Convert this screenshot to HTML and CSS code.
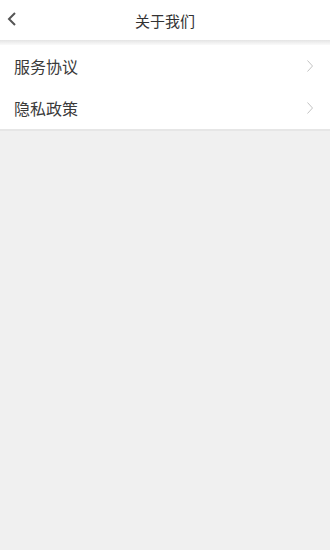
FILE: index.html
```html
<!DOCTYPE html>
<html lang="zh">
<head>
<meta charset="utf-8">
<link rel="stylesheet" href="styles.css">
</head>
<body>
<div class="page">
  <header class="nav">
    <svg class="back" width="12" height="16" viewBox="0 0 12 16"><path d="M9 2 L3 8 L9 14" fill="none" stroke="#555" stroke-width="2"/></svg>
    <div class="title">关于我们</div>
  </header>
  <div class="shadow"></div>
  <ul class="list">
    <li class="item"><span>服务协议</span><svg class="arrow" width="8" height="14" viewBox="0 0 8 14"><path d="M1.5 1.5 L6.5 7 L1.5 12.5" fill="none" stroke="#c4c4c4" stroke-width="1"/></svg></li>
    <li class="item"><span>隐私政策</span><svg class="arrow" width="8" height="14" viewBox="0 0 8 14"><path d="M1.5 1.5 L6.5 7 L1.5 12.5" fill="none" stroke="#c4c4c4" stroke-width="1"/></svg></li>
  </ul>
  <div class="rest"></div>
</div>
</body>
</html>
```
FILE: styles.css
```css
* { box-sizing: border-box; margin: 0; padding: 0; }
html, body { width: 330px; height: 550px; }
body { background: #f0f0f0; font-family: "Noto Sans CJK SC", "Noto Sans", sans-serif; color: #333; }
.page { display: flex; flex-direction: column; height: 550px; }
.nav { height: 40px; background: #fff; display: flex; align-items: center; justify-content: center; position: relative; }
.back { position: absolute; left: 6px; top: 11px; }
.title { font-size: 15px; color: #333; }
.shadow { height: 5px; background: linear-gradient(#e4e4e4, #f2f2f2 60%, #fafafa); }
.list { list-style: none; background: #fff; border-bottom: 2px solid #e6e6e6; }
.item { height: 42px; display: flex; align-items: center; justify-content: space-between; padding: 0 16px 1px 14px; font-size: 16px; color: #3a3a3a; }
.arrow { display: block; }
.rest { flex: 1; background: #f0f0f0; }
```
